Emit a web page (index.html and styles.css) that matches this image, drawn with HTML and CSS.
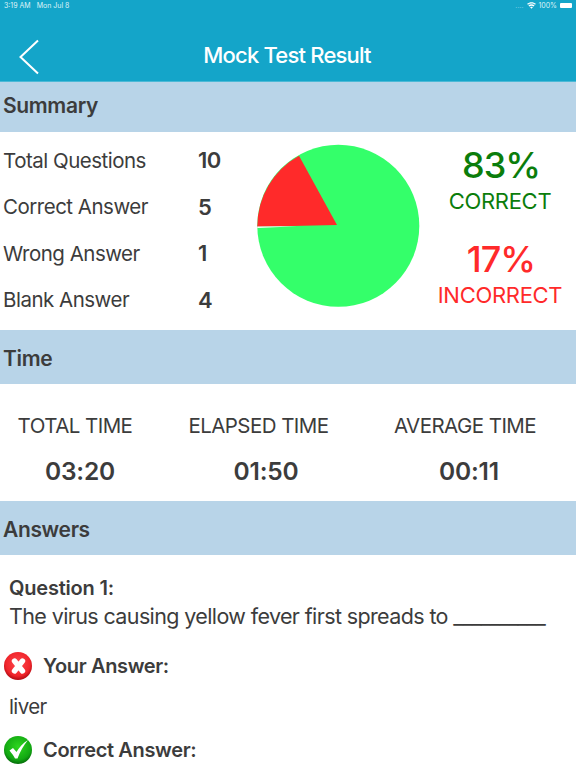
FILE: index.html
```html
<!DOCTYPE html>
<html lang="en">
<head>
<meta charset="utf-8">
<title>Mock Test Result</title>
<link rel="stylesheet" href="styles.css">
</head>
<body>
<div class="page">
  <header class="nav">
    <div class="status">
      <span class="status-left"><span>3:19 AM</span><span>Mon Jul 8</span></span>
      <span class="status-right">
        <span class="dots">....</span>
        <svg class="wifi" width="9" height="7" viewBox="0 0 10 8"><path d="M5 7.8 3.4 6C4.3 5.3 5.7 5.3 6.6 6ZM2.6 5.1 1.5 3.9C3.5 2.2 6.5 2.2 8.5 3.9L7.4 5.1C6 4 4 4 2.6 5.1ZM.9 3.2 0 2.1C2.8 -.4 7.2 -.4 10 2.1L9.1 3.2C6.8 1.2 3.2 1.2.9 3.2Z" fill="#fff"/></svg>
        <span>100%</span>
        <span class="battery"></span>
      </span>
    </div>
    <div class="titlebar">
      <svg class="back" width="22" height="36" viewBox="0 0 22 36"><path d="M20 1.5 2.5 18 20 34.5" fill="none" stroke="#fff" stroke-width="2"/></svg>
      <h1>Mock Test Result</h1>
    </div>
  </header>

  <h2 class="band band-summary">Summary</h2>
  <section class="summary">
    <div class="stats">
      <div class="stat"><span class="stat-label">Total Questions</span><span class="stat-value">10</span></div>
      <div class="stat"><span class="stat-label">Correct Answer</span><span class="stat-value">5</span></div>
      <div class="stat"><span class="stat-label">Wrong Answer</span><span class="stat-value">1</span></div>
      <div class="stat"><span class="stat-label">Blank Answer</span><span class="stat-value">4</span></div>
    </div>
    <svg class="pie" width="164" height="164" viewBox="0 0 164 164">
      <circle cx="81.3" cy="81.8" r="81" fill="#34ff6a"/>
      <path d="M80 81 L42 11.7 A81 81 0 0 0 .3 82.8 Z" fill="#ff2a2a"/>
      <path d="M.3 82.6 40 82.2 .3 84Z" fill="#fff"/>
    </svg>
    <div class="percents">
      <div class="pct pct-good"><strong>83%</strong><span>CORRECT</span></div>
      <div class="pct pct-bad"><strong>17%</strong><span>INCORRECT</span></div>
    </div>
  </section>

  <h2 class="band band-time">Time</h2>
  <section class="times">
    <div class="time time-total"><span>TOTAL TIME</span><strong>03:20</strong></div>
    <div class="time time-elapsed"><span>ELAPSED TIME</span><strong>01:50</strong></div>
    <div class="time time-average"><span>AVERAGE TIME</span><strong>00:11</strong></div>
  </section>

  <h2 class="band band-answers">Answers</h2>
  <section class="answers">
    <p class="q-num">Question 1:</p>
    <p class="q-text">The virus causing yellow fever first spreads to __________</p>
    <div class="answer-head">
      <svg class="mark" width="28" height="28" viewBox="0 0 28 28">
        <defs><radialGradient id="r" cx="50%" cy="42%" r="58%"><stop offset="0" stop-color="#ff4a4f"/><stop offset=".75" stop-color="#f0252b"/><stop offset="1" stop-color="#b00a12"/></radialGradient></defs>
        <circle cx="14" cy="14" r="14" fill="url(#r)"/>
        <path d="M10.5 9 18.5 19M18.5 9 10.5 19" stroke="#fff" stroke-width="5.4" stroke-linecap="round"/>
      </svg>
      <span>Your Answer:</span>
    </div>
    <p class="answer-text">liver</p>
    <div class="answer-head">
      <svg class="mark" width="28" height="28" viewBox="0 0 28 28">
        <defs><radialGradient id="g" cx="50%" cy="38%" r="62%"><stop offset="0" stop-color="#2ed61f"/><stop offset=".75" stop-color="#12a812"/><stop offset="1" stop-color="#056b0a"/></radialGradient></defs>
        <circle cx="14" cy="14" r="14" fill="url(#g)"/>
        <path d="M5.5 14.5 9 12 12.5 16C15 11.5 19 7 24 4 19.5 9.5 16 15.5 13.5 22.5H11C9.5 19.5 7.5 17 5.5 14.5Z" fill="#fff"/>
      </svg>
      <span>Correct Answer:</span>
    </div>
  </section>
</div>
</body>
</html>
```

FILE: styles.css
```css
* { box-sizing: border-box; }
html, body { margin: 0; padding: 0; }
body { font-family: Inter, "Liberation Sans", sans-serif; background: #fff; color: #3c3c3c; }
.page { width: 576px; height: 768px; overflow: hidden; }
p, h1, h2 { margin: 0; }

.nav { height: 82px; background: #14a5c9; border-bottom: 1px solid #4cb9d6; color: #fff; }
.status { height: 11px; display: flex; justify-content: space-between; align-items: center; padding: 0 4px; font-size: 7px; color: #dff3f8; }
.status-left { display: flex; gap: 6px; }
.status-right { display: flex; align-items: center; gap: 2px; }
.dots { color: #7fcde2; margin-right: 2px; }
.battery { width: 12px; height: 5px; background: #fff; border-radius: 1px; margin-left: 1px; }
.titlebar { height: 70px; display: flex; align-items: center; justify-content: center; position: relative; }
.back { position: absolute; left: 18px; top: 28px; }
.titlebar h1 { font-size: 22px; font-weight: 500; letter-spacing: -0.8px; margin: 17px 2px 0 0; }

.band { background: #b8d4e8; display: flex; align-items: center; padding-left: 3px; font-size: 21px; font-weight: 600; color: #3c3c3c; letter-spacing: -0.35px; }
.band-summary { height: 50px; padding-bottom: 3px; }
.band-time { height: 54px; padding-top: 2px; }
.band-answers { height: 54px; padding-top: 2px; }

.summary { height: 198px; display: flex; }
.stats { width: 257px; padding-top: 5px; }
.stat { height: 46.5px; display: flex; align-items: center; font-size: 20.5px; letter-spacing: -0.5px; }
.stat-label { width: 195px; padding-left: 3px; }
.stat-value { font-weight: 600; font-size: 22px; padding-left: 3px; }
.pie { margin-top: 12px; flex: none; }
.percents { flex: 1; display: flex; flex-direction: column; align-items: center; padding-top: 12px; gap: 22px; padding-left: 3px; }
.pct { display: flex; flex-direction: column; align-items: center; }
.pct strong { font-size: 36px; font-weight: 500; line-height: 42px; letter-spacing: -1px; margin-left: 2px; }
.pct span { font-size: 22px; line-height: 30px; letter-spacing: -0.3px; }
.pct-good { color: #0b7d0b; }
.pct-bad { color: #ff2a2a; }

.times { height: 117px; display: flex; }
.time { display: flex; flex-direction: column; align-items: center; padding-top: 27px; }
.time span { font-size: 20.5px; line-height: 30px; letter-spacing: -0.55px; }
.time strong { font-size: 24.5px; font-weight: 600; line-height: 30px; margin-top: 15px; letter-spacing: -0.2px; }
.time-total { width: 150px; }
.time-total strong { margin-left: 10px; }
.time-elapsed { width: 217px; }
.time-elapsed strong { margin-left: 15px; }
.time-average { flex: 1; padding-right: 13px; }
.time-average strong { margin-left: 8px; }

.answers { padding-top: 20px; }
.q-num { font-size: 20px; font-weight: 600; line-height: 27px; padding-left: 9px; letter-spacing: -0.2px; }
.q-text { font-size: 21.5px; line-height: 28px; padding-left: 9px; letter-spacing: -0.62px; white-space: nowrap; }
.answer-head { display: flex; align-items: center; gap: 11px; padding-left: 4px; font-size: 20px; font-weight: 600; letter-spacing: -0.35px; height: 28px; }
.q-text + .answer-head { margin-top: 22px; }
.answer-text { font-size: 20.5px; line-height: 28px; padding-left: 9px; margin: 13px 0 15px; letter-spacing: -0.6px; }
.mark { flex: none; }
```
